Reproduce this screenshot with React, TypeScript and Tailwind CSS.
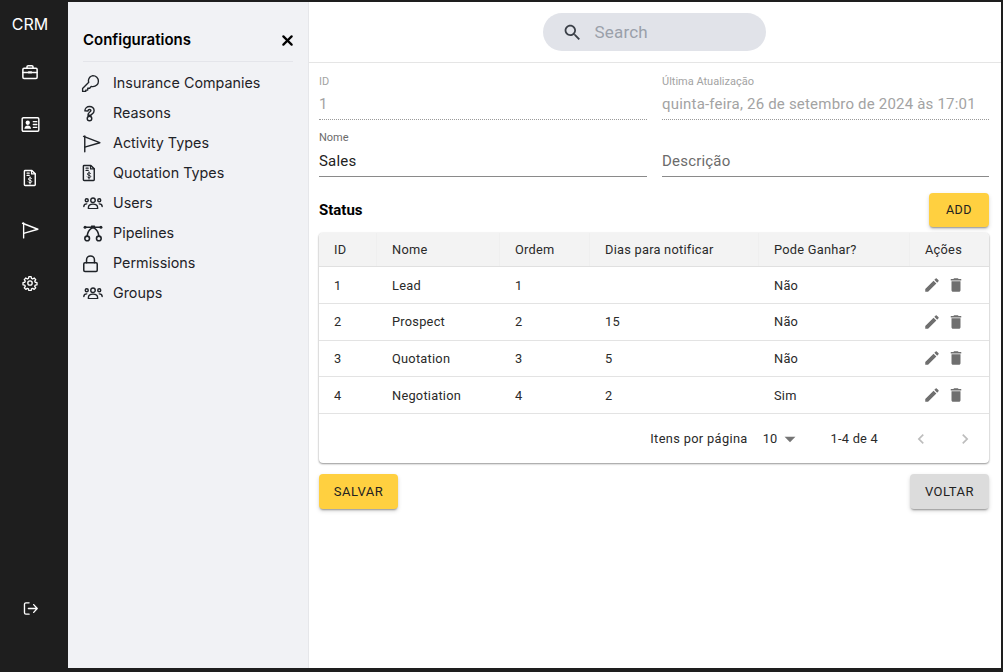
import React from "react";

type P = { className?: string };
const S = ({ className, children, w = 1.7, vb = "0 0 24 24" }: P & { children: React.ReactNode; w?: number; vb?: string }) => (
  <svg viewBox={vb} fill="none" stroke="currentColor" strokeWidth={w} strokeLinecap="round" strokeLinejoin="round" className={className}>
    {children}
  </svg>
);
const F = ({ d, className }: P & { d: string }) => (
  <svg viewBox="0 0 24 24" fill="currentColor" className={className}><path d={d} /></svg>
);

const Briefcase = ({ className }: P) => (
  <S className={className} w={2}>
    <rect x="2.500" y="7" width="19" height="13.500" rx="1.500" />
    <path d="M8 7V5a1.500 1.500 0 0 1 1.500-1.500h5A1.500 1.500 0 0 1 16 5v2" />
    <path d="M2.500 12.500h7M14.500 12.500h7" />
    <rect x="9.500" y="11" width="5" height="3" fill="currentColor" stroke="none" />
  </S>
);
const IdCard = ({ className }: P) => (
  <S className={className} w={1.800}>
    <rect x="1.500" y="3.500" width="21" height="17" rx="1.500" />
    <circle cx="8.500" cy="9.800" r="2.700" fill="currentColor" stroke="none" />
    <path d="M4.300 17.500c.3-3 2.100-4.300 4.200-4.300s3.900 1.300 4.200 4.300z" fill="currentColor" stroke="none" />
    <path d="M15.500 8.500h4.500M15.500 12h4.500M15.500 15.500h4.500" strokeWidth="1.600" />
  </S>
);
const Invoice = ({ className }: P) => (
  <S className={className} w={1.900}>
    <path d="M5.500 2h9l4.500 4.500v14.500a1 1 0 0 1-1 1H5.500a1 1 0 0 1-1-1V3a1 1 0 0 1 1-1z" />
    <path d="M14 2v4.500h5M8 5.500h3M8 8.500h3" strokeWidth="1.500" />
    <path d="M14.200 12.800c-.4-.7-1.200-1-2.200-1-1.200 0-2.200.6-2.200 1.600 0 2.200 4.500 1 4.500 3.300 0 1-1 1.600-2.300 1.600-1 0-1.900-.4-2.300-1.100M12 10.500v9.600" strokeWidth="1.300" />
  </S>
);
const Flag = ({ className }: P) => (
  <S className={className} w={1.800}>
    <path d="M3.500 2.500v20" />
    <path d="M2 3 22.500 11 3.500 16.500" />
  </S>
);
const Gear = ({ className }: P) => (
  <S className={className} w={2}>
    <path d="M10.300 2.500h3.400l.5 2.700 1.800.8 2.300-1.500 2.300 2.400-1.500 2.200.7 1.800 2.700.5v3.300l-2.700.5-.7 1.800 1.500 2.200-2.300 2.400-2.300-1.500-1.800.8-.5 2.700h-3.400l-.5-2.700-1.800-.8-2.300 1.500-2.300-2.400 1.500-2.200-.7-1.800-2.700-.5v-3.300l2.700-.5.7-1.800-1.500-2.200 2.300-2.400 2.300 1.500 1.800-.8z" />
    <circle cx="12" cy="12" r="3.300" />
  </S>
);
const Logout = ({ className }: P) => (
  <S className={className} w={1.900}>
    <path d="M10 4H5.500A2 2 0 0 0 3.500 6v12a2 2 0 0 0 2 2H10" />
    <path d="M9 12h12.500M16.500 6.500l5 5.500-5 5.500" />
  </S>
);
const Key = ({ className }: P) => (
  <S className={className} w={1.700}>
    <path d="M15 2a7 7 0 0 1 7 7c0 3.900-3.100 7-7 7-.8 0-1.500-.1-2.100-.3L11 18H8.500v2.300H6V22H2v-3.800l7.800-7.800c-.3-.7-.4-1.500-.4-2.300A7 7 0 0 1 15 2z" />
  </S>
);
const Question = ({ className }: P) => (
  <S className={className} w={2}>
    <path d="M5.500 8.300C5.500 4.800 8.500 2 12 2s6.500 2.600 6.500 6c0 2.500-1.500 3.800-3 4.800-.9.600-1.300 1-1.300 1.700h-4.400c0-2.300 1-3.500 2.600-4.600 1-.7 1.600-1.200 1.600-2 0-.9-.8-1.500-2-1.500s-2.100.8-2.100 2z" />
    <circle cx="12" cy="19" r="3.200" />
  </S>
);
const Users = ({ className }: P) => (
  <S className={className} w={1.700} vb="0 0 24 15">
    <circle cx="12" cy="3.800" r="2.700" />
    <circle cx="4.500" cy="3.800" r="1.800" />
    <circle cx="19.500" cy="3.800" r="1.800" />
    <path d="M6.500 14v-1.500c0-2.500 2.200-4 5.500-4s5.500 1.500 5.500 4V14z" />
    <path d="M1 11.500c0-2 1.500-3.300 3.500-3.300M23 11.500c0-2-1.500-3.300-3.500-3.300" />
  </S>
);
const Bezier = ({ className }: P) => (
  <S className={className} w={1.900}>
    <rect x="9.500" y="3" width="5" height="4" rx=".5" fill="currentColor" stroke="none" />
    <circle cx="2.500" cy="5" r="1.800" fill="currentColor" stroke="none" />
    <circle cx="21.500" cy="5" r="1.800" fill="currentColor" stroke="none" />
    <path d="M2.500 5h7M14.500 5h7M10 6.500C7 8.500 5.500 11.500 5 15.500M14 6.500c3 2 4.500 5 5 9" />
    <circle cx="5" cy="18.500" r="2.800" />
    <circle cx="19" cy="18.500" r="2.800" />
  </S>
);
const Lock = ({ className }: P) => (
  <S className={className} w={1.900}>
    <rect x="3.500" y="11" width="17" height="11" rx="1.500" />
    <path d="M7 11V7.500a5 5 0 0 1 10 0V11" />
  </S>
);

const rail = [
  { Icon: Briefcase, cls: "w-[18px] h-[18px]" },
  { Icon: IdCard, cls: "w-[19px] h-[19px]" },
  { Icon: Invoice, cls: "w-[18px] h-[18px]" },
  { Icon: Flag, cls: "w-[18px] h-[18px]" },
  { Icon: Gear, cls: "w-[16px] h-[16px]" },
];

const menu = [
  { label: "Insurance Companies", Icon: Key, cls: "w-[19px] h-[19px] -ml-[2px]" },
  { label: "Reasons", Icon: Question, cls: "w-[17px] h-[17px] -ml-[2px]" },
  { label: "Activity Types", Icon: Flag, cls: "w-[19px] h-[19px] -ml-[1px]" },
  { label: "Quotation Types", Icon: Invoice, cls: "w-[18px] h-[18px] -ml-[3px]" },
  { label: "Users", Icon: Users, cls: "w-[20px] h-[12.500px]" },
  { label: "Pipelines", Icon: Bezier, cls: "w-[20px] h-[20px]" },
  { label: "Permissions", Icon: Lock, cls: "w-[19px] h-[19px] -ml-[2px]" },
  { label: "Groups", Icon: Users, cls: "w-[20px] h-[12.500px]" },
];

const rows = [
  ["1", "Lead", "1", "", "Não"],
  ["2", "Prospect", "2", "15", "Não"],
  ["3", "Quotation", "3", "5", "Não"],
  ["4", "Negotiation", "4", "2", "Sim"],
];

const cols = "grid grid-cols-[58px_123px_90px_169px_151px_1fr]";
const EDIT = "M3 17.25V21h3.75L17.81 9.94l-3.75-3.75L3 17.25zM20.71 7.04c.39-.39.39-1.02 0-1.41l-2.34-2.34a.9959.9959 0 0 0-1.41 0l-1.83 1.83 3.75 3.75 1.83-1.83z";
const TRASH = "M6 19c0 1.1.9 2 2 2h8c1.1 0 2-.9 2-2V7H6v12zM19 4h-3.5l-1-1h-5l-1 1H5v2h14V4z";
const SEARCH = "M15.5 14h-.79l-.28-.27C15.41 12.59 16 11.11 16 9.5 16 5.91 13.09 3 9.5 3S3 5.91 3 9.5 5.91 16 9.5 16c1.61 0 3.09-.59 4.23-1.57l.27.28v.79l5 4.99L20.49 19l-4.99-5zm-6 0C7.01 14 5 11.99 5 9.5S7.01 5 9.5 5 14 7.01 14 9.5 11.99 14 9.5 14z";

const Field = ({ label, value, disabled, muted, tall }: { label?: string; value: string; disabled?: boolean; muted?: boolean; tall?: boolean }) => (
  <div className="flex flex-col">
    <div className={`h-[15px] text-[11px] leading-[15px] ${disabled ? "text-[#a3a3a3]" : "text-[#6b6b6b]"}`}>{label}</div>
    <div className={`${tall ? "h-[32px] pt-[4px]" : "h-[31px] pt-[3px]"} text-[15px] leading-[24px] tracking-[0.2px] border-b ${disabled ? "text-[#a3a3a3] border-dotted border-[#9a9a9a]" : muted ? "text-[#6b6b6b] border-[#8a8a8a]" : "text-[#222] border-[#8a8a8a]"}`}>
      {value}
    </div>
  </div>
);

const btnShadow = "shadow-[0_2px_2px_-1px_rgba(0,0,0,0.35),0_2px_4px_0_rgba(0,0,0,0.15)]";

export default function App() {
  return (
    <div className="w-screen h-screen overflow-hidden bg-[#1e1e1e] flex pt-[2px] pr-[2px] pb-[4px] font-['Inter','Liberation_Sans',sans-serif]">
      <aside className="w-[68px] shrink-0 flex flex-col items-center pr-[8px] text-white">
        <div className="h-[44px] pt-[11px] text-[16px] leading-[22px]">CRM</div>
        <nav className="flex flex-col items-center gap-[34.750px] pt-[17px]">
          {rail.map(({ Icon, cls }, i) => (
            <div key={i} className="w-[18px] h-[18px] flex items-center justify-center">
              <Icon className={`shrink-0 ${cls}`} />
            </div>
          ))}
        </nav>
        <div className="mt-auto pb-[51px]">
          <Logout className="w-[17px] h-[17px]" />
        </div>
      </aside>

      <section className="w-[241px] shrink-0 bg-[#f1f2f5] border-r border-[#e6e7ea] pl-[15px] pr-[15px]">
        <div className="h-[60px] flex items-center justify-between border-b border-[#e4e5ea] pt-[18px] text-black">
          <span className="text-[15px] font-semibold">Configurations</span>
          <svg viewBox="0 0 12 12" className="w-[11px] h-[11px]" stroke="currentColor" strokeWidth="2.400" strokeLinecap="round">
            <path d="M1.500 1.500l9 9M10.500 1.500l-9 9" />
          </svg>
        </div>
        <ul className="pt-[6px] text-[#1f2328]">
          {menu.map(({ label, Icon, cls }) => (
            <li key={label} className="h-[30px] flex items-center">
              <span className="w-[30px] shrink-0 flex items-center"><Icon className={`shrink-0 ${cls}`} /></span>
              <span className="text-[14.350px]">{label}</span>
            </li>
          ))}
        </ul>
      </section>

      <main className="flex-1 min-w-0 bg-white flex flex-col font-['Roboto',sans-serif]">
        <header className="h-[61px] shrink-0 border-b border-[#e5e5e5] flex items-center justify-center">
          <div className="w-[223px] h-[38px] -translate-x-[1px] rounded-full bg-[#e1e3e9] flex items-center pl-[19px]">
            <F d={SEARCH} className="w-[21px] h-[21px] text-[#3a3f47]" />
            <span className="ml-[12px] pt-[1px] text-[17px] tracking-[0.2px] text-[#9aa0aa]">Search</span>
          </div>
        </header>

        <div className="pt-[11px] pl-[10px] pr-[12px] flex flex-col">
          <div className="grid grid-cols-[328px_1fr] gap-x-[15px] gap-y-[10px]">
            <Field label="ID" value="1" disabled />
            <Field label="Última Atualização" value="quinta-feira, 26 de setembro de 2024 às 17:01" disabled />
            <Field label="Nome" value="Sales" tall />
            <Field value="Descrição" muted tall />
          </div>

          <div className="mt-[16px] h-[34px] flex items-center justify-between">
            <h2 className="text-[15px] font-bold text-black">Status</h2>
            <button className={`w-[60px] h-[34px] rounded-[4px] bg-[#ffd040] text-[12.500px] font-normal tracking-[0.5px] text-[#222] ${btnShadow}`}>ADD</button>
          </div>

          <div className="mt-[6px] rounded-[4px] overflow-hidden shadow-[0_1px_2px_0_rgba(0,0,0,0.4),0_0_2px_0_rgba(0,0,0,0.1)] text-[12.800px] tracking-[0.25px] text-[#2a2a2a]">
            <div className={`${cols} h-[34px] items-center bg-[#f3f3f3] border-b border-[#e0e0e0]`}>
              {["ID", "Nome", "Ordem", "Dias para notificar", "Pode Ganhar?", "Ações"].map((h) => (
                <div key={h} className="pl-[15px] h-full flex items-center border-r border-[#efefef] last:border-r-0 whitespace-nowrap">{h}</div>
              ))}
            </div>
            {rows.map((r, ri) => (
              <div key={r[0]} className={`${cols} h-[36.750px] items-center border-b border-[#e3e3e3] ${ri === 0 ? "pt-[1px]" : ""}`}>
                {r.map((c, i) => (
                  <div key={i} className="pl-[15px] whitespace-nowrap">{c}</div>
                ))}
                <div className="pl-[13px] flex items-center gap-[6px] text-[#6f6f6f]">
                  <F d={EDIT} className="w-[18px] h-[18px]" />
                  <F d={TRASH} className="w-[18px] h-[18px]" />
                </div>
              </div>
            ))}
            <div className="h-[49px] flex items-center justify-end">
              <span className="tracking-[0.35px]">Itens por página</span>
              <span className="ml-[15px]">10</span>
              <F d="M7 10l5 5 5-5z" className="-ml-[1px] w-[26px] h-[26px] text-[#757575]" />
              <span className="ml-[28px]">1-4 de 4</span>
              <F d="M15.41 7.41 14 6l-6 6 6 6 1.41-1.41L10.83 12z" className="ml-[33px] w-[20px] h-[20px] text-[#bdbdbd]" />
              <F d="M10 6 8.59 7.41 13.17 12l-4.58 4.59L10 18l6-6z" className="ml-[24px] mr-[14px] w-[20px] h-[20px] text-[#bdbdbd]" />
            </div>
          </div>

          <div className="mt-[11px] flex justify-between">
            <button className={`w-[79px] h-[35px] rounded-[4px] bg-[#ffd040] text-[13px] font-normal tracking-[0.5px] text-[#222] ${btnShadow}`}>SALVAR</button>
            <button className={`w-[79px] h-[35px] rounded-[4px] bg-[#dcdcdc] text-[13px] font-normal tracking-[0.5px] text-[#222] ${btnShadow}`}>VOLTAR</button>
          </div>
        </div>
      </main>
    </div>
  );
}
